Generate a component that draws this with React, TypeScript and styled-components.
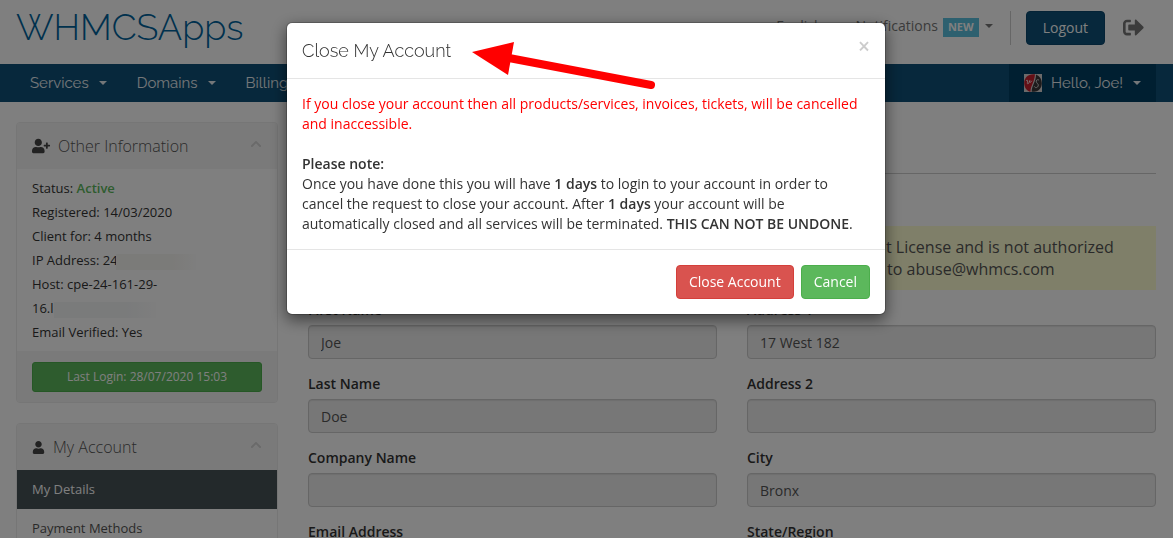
import React from "react";
import styled, { createGlobalStyle } from "styled-components";
import { FaChevronUp, FaSignOutAlt, FaUser, FaUserPlus } from "react-icons/fa";

const GlobalStyle = createGlobalStyle`
  *, *::before, *::after { box-sizing: border-box; }
  html, body { margin: 0; height: 100%; overflow: hidden; }
  body {
    background: #fff;
    color: #333;
    font: 14px/20px "Open Sans", Verdana, sans-serif;
  }
  button, input { font: inherit; }
  a { color: inherit; text-decoration: none; }
  b { font-weight: 600; }
`;

const display = `"Raleway", Lato, "Open Sans", sans-serif`;

const Container = styled.div`
  width: 100%;
  max-width: 1180px;
  margin: 0 auto;
  padding: 0 17px 0 16px;
`;

const HeaderRow = styled(Container)`
  display: flex;
  justify-content: space-between;
  height: 64px;
`;

const Logo = styled.a`
  color: #00639c;
  font: 300 36px/54px ${display};
`;

const TopNav = styled.nav`
  display: flex;
  align-items: center;
  height: 34px;
  margin: 11px 12px 0 0;
`;

const TopLink = styled.a`
  display: flex;
  align-items: center;
  height: 34px;
  margin-right: 17px;
  padding-bottom: 4px;
  color: #777;
`;

const Badge = styled.span`
  height: 19px;
  margin: 3px 6px 0 5px;
  padding: 0 5px;
  background: #5bc0de;
  color: #fff;
  font-size: 11px;
  line-height: 18px;
  font-weight: 700;
`;

const Caret = styled.span<{ $gap?: number }>`
  display: inline-block;
  margin-left: ${(p) => p.$gap ?? 0}px;
  border: 4px solid transparent;
  border-top-color: currentColor;
  border-bottom: 0;
`;

const LogoutCell = styled.div`
  margin-right: 18px;
  padding-left: 15px;
  border-left: 1px solid #ccc;
`;

const Button = styled.button<{ $color: string; $edge: string; $pad?: number }>`
  height: 34px;
  padding: 0 ${(p) => p.$pad ?? 12}px;
  border: 1px solid ${(p) => p.$edge};
  border-radius: 4px;
  background: ${(p) => p.$color};
  color: #fff;
`;

const IconLink = styled.a`
  display: flex;
  padding-bottom: 2px;
  color: #777;
  font-size: 21px;
`;

const MenuBar = styled.nav`
  background: #0e5078;
`;

const MenuRow = styled(Container)`
  display: flex;
  height: 38px;
  padding-left: 15px;
`;

const MenuLink = styled.a<{ $account?: boolean }>`
  display: flex;
  align-items: center;
  margin-left: ${(p) => (p.$account ? "auto" : "0")};
  padding: 0 15px;
  background: ${(p) => (p.$account ? "#003f62" : "transparent")};
  color: #e8eef2;
  font: 15px/20px ${display};
`;

const Avatar = styled.svg`
  width: 18px;
  height: 18px;
  margin-right: 9px;
`;

const Columns = styled(Container)`
  display: grid;
  grid-template-columns: minmax(200px, 262px) minmax(0, 1fr);
  gap: 30px;
  padding-top: 20px;
`;

const Sidebar = styled.aside`
  display: flex;
  flex-direction: column;
  gap: 20px;
  font-size: 13px;
`;

const Panel = styled.section`
  border: 1px solid #ececec;
  border-radius: 4px;
  overflow: hidden;
`;

const PanelTitle = styled.h3`
  display: flex;
  align-items: center;
  gap: 8px;
  height: 46px;
  margin: 0;
  padding: 0 15px;
  background: #f5f5f5;
  color: #555;
  font-size: 16px;
  font-weight: 300;
`;

const Collapse = styled.button`
  display: flex;
  margin-left: auto;
  padding: 0 0 4px;
  border: 0;
  background: none;
  color: #d4d4d4;
  font-size: 12px;
`;

const PanelBody = styled.div`
  padding: 7px 15px;
  line-height: 24px;
`;

const Active = styled.span`
  color: #5cb85c;
  font-weight: 600;
`;

const Redacted = styled.span<{ $tint: string; $width: number; $over?: number }>`
  display: inline-block;
  width: ${(p) => p.$width}px;
  height: 16px;
  margin-left: -${(p) => p.$over ?? 0}px;
  vertical-align: middle;
  background: linear-gradient(90deg, ${(p) => p.$tint} 70%, #fdfdfd);
`;

const PanelFooter = styled.div`
  padding: 11px 15px 10px;
  background: #f5f5f5;
`;

const LoginButton = styled(Button)`
  display: block;
  width: 100%;
  height: 30px;
  border-radius: 3px;
  font-size: 12px;
`;

const SideLink = styled.a<{ $on?: boolean }>`
  display: block;
  height: 39px;
  padding: 9px 15px;
  background: ${(p) => (p.$on ? "#465257" : "#fff")};
  color: ${(p) => (p.$on ? "#fff" : "#555")};
`;

const Main = styled.main`
  min-width: 0;
`;

const TitleRule = styled.hr`
  height: 52px;
  margin: 0 0 52px;
  border: 0;
  border-bottom: 1px solid #ccc;
`;

const LicenseNote = styled.p`
  margin: 0 0 10px;
  padding: 10px;
  background: #ffffd2;
  color: #555;
  font-size: 16px;
  line-height: 22px;
  text-align: center;
`;

const Form = styled.form`
  display: grid;
  grid-template-columns: 1fr 1fr;
  gap: 15px 30px;
`;

const Field = styled.label`
  display: flex;
  flex-direction: column;
  gap: 5px;
  font-weight: 600;
`;

const TextBox = styled.input`
  width: 100%;
  height: 34px;
  padding: 6px 12px;
  border: 1px solid #ccc;
  border-radius: 4px;
  background: #eee;
  box-shadow: inset 0 1px 1px rgba(0, 0, 0, 0.075);
  color: #555;
  font-weight: 400;
`;

const Backdrop = styled.div`
  position: fixed;
  inset: 0;
  display: flex;
  justify-content: center;
  align-items: flex-start;
  padding: 22px 1px 0 0;
  background: rgba(0, 0, 0, 0.5);
`;

const Dialog = styled.div`
  position: relative;
  width: 600px;
  max-width: 100%;
  border: 1px solid rgba(0, 0, 0, 0.2);
  border-radius: 6px;
  background: #fff;
  background-clip: padding-box;
  box-shadow: 0 5px 15px rgba(0, 0, 0, 0.5);
`;

const DialogHeader = styled.header`
  display: flex;
  justify-content: space-between;
  align-items: center;
  height: 56px;
  padding: 0 15px;
  border-bottom: 1px solid #e5e5e5;
`;

const DialogTitle = styled.h4`
  margin: 0;
  font: 300 18px/24px ${display};
`;

const CloseButton = styled.button`
  padding: 0 0 10px;
  border: 0;
  background: none;
  color: #ccc;
  font-size: 21px;
  line-height: 20px;
  font-weight: 600;
`;

const DialogBody = styled.div`
  padding: 15px;
`;

const Paragraph = styled.p<{ $warning?: boolean }>`
  margin: 0 0 ${(p) => (p.$warning ? 20 : 0)}px;
  color: ${(p) => (p.$warning ? "#f00" : "#333")};
`;

const DialogFooter = styled.footer`
  display: flex;
  justify-content: flex-end;
  gap: 7px;
  padding: 15px;
  border-top: 1px solid #e5e5e5;
`;

const Arrow = styled.svg`
  position: absolute;
  left: 184px;
  top: 18px;
  width: 186px;
  height: 50px;
  pointer-events: none;
`;

const fields = [
  ["First Name", "Joe"],
  ["Address 1", "17 West 182"],
  ["Last Name", "Doe"],
  ["Address 2", ""],
  ["Company Name", ""],
  ["City", "Bronx"],
  ["Email Address", ""],
  ["State/Region", ""],
];

export default function App() {
  return (
    <>
      <GlobalStyle />
      <HeaderRow as="header">
        <Logo href="#">WHMCSApps</Logo>
        <TopNav>
          <TopLink href="#">
            English
            <Caret $gap={8} />
          </TopLink>
          <TopLink href="#">
            Notifications
            <Badge>NEW</Badge>
            <Caret />
          </TopLink>
          <LogoutCell>
            <Button $color="#0e5078" $edge="#0b476c" $pad={16}>
              Logout
            </Button>
          </LogoutCell>
          <IconLink href="#" aria-label="Sign out">
            <FaSignOutAlt />
          </IconLink>
        </TopNav>
      </HeaderRow>
      <MenuBar>
        <MenuRow>
          {["Services", "Domains", "Billing"].map((name) => (
            <MenuLink href="#" key={name}>
              {name}
              <Caret $gap={10} />
            </MenuLink>
          ))}
          <MenuLink href="#" $account>
            <Avatar viewBox="0 0 18 18" aria-hidden="true">
              <rect width="18" height="18" fill="#d8d4d4" />
              <path d="M11 0.300C4 -0.500 0 4 0.200 9.500C0.500 14 3 17.200 6.500 17.700C6.500 12 10.500 8 11 0.300Z" fill="#c81e2d" />
              <path d="M12 0.500C17 2.500 18.800 8 17.300 12.500C15.500 17 11.500 18.200 7.700 17.800C7.500 12 12 8 12 0.500Z" fill="#3a3638" />
              <path d="M2 7c1-1.500 2-1 1.500 1s.5 3 1.500.5l.8-2c-.6 2.500.5 2.500 2 .3" fill="none" stroke="#fff" strokeWidth="0.800" />
              <path d="M15 6c-2-1-3.500.6-2.500 2.300s2.500 2 1.500 4-3.500 1.500-3.500 0" fill="none" stroke="#eee" strokeWidth="0.800" />
            </Avatar>
            Hello, Joe!
            <Caret $gap={10} />
          </MenuLink>
        </MenuRow>
      </MenuBar>
      <Columns>
        <Sidebar>
          <Panel>
            <PanelTitle>
              <FaUserPlus size={18} color="#444" />
              Other Information
              <Collapse aria-label="Collapse Other Information">
                <FaChevronUp />
              </Collapse>
            </PanelTitle>
            <PanelBody>
              <div>Status: <Active>Active</Active></div>
              <div>Registered: 14/03/2020</div>
              <div>Client for: 4 months</div>
              <div>IP Address: 24<Redacted $tint="#f7f6f2" $width={80} $over={2} /></div>
              <div>
                Host: cpe-24-161-29-
                <br />
                16.l<Redacted $tint="#f4f6f7" $width={102} />
              </div>
              <div>Email Verified: Yes</div>
            </PanelBody>
            <PanelFooter>
              <LoginButton $color="#5cb85c" $edge="#4cae4c">
                Last Login: 28/07/2020 15:03
              </LoginButton>
            </PanelFooter>
          </Panel>
          <Panel>
            <PanelTitle>
              <FaUser size={13} color="#444" />
              My Account
              <Collapse aria-label="Collapse My Account">
                <FaChevronUp />
              </Collapse>
            </PanelTitle>
            <SideLink href="#" $on>My Details</SideLink>
            <SideLink href="#">Payment Methods</SideLink>
          </Panel>
        </Sidebar>
        <Main>
          <TitleRule />
          <LicenseNote>
            Dev License: This installation of WHMCS is running under a Development License and is
            not authorized
            <br />
            to be used for production use. Please report any cases of abuse to abuse@whmcs.com
          </LicenseNote>
          <Form>
            {fields.map(([label, value]) => (
              <Field key={label}>
                {label}
                <TextBox defaultValue={value} disabled />
              </Field>
            ))}
          </Form>
        </Main>
      </Columns>
      <Backdrop>
        <Dialog role="dialog" aria-modal="true" aria-labelledby="close-account-title">
          <DialogHeader>
            <DialogTitle id="close-account-title">Close My Account</DialogTitle>
            <CloseButton aria-label="Close">×</CloseButton>
          </DialogHeader>
          <DialogBody>
            <Paragraph $warning>
              If you close your account then all products/services, invoices, tickets, will be
              cancelled and inaccessible.
            </Paragraph>
            <Paragraph>
              <b>Please note:</b>
            </Paragraph>
            <Paragraph>
              Once you have done this you will have <b>1 days</b> to login to your account in order
              to cancel the request to close your account. After <b>1 days</b> your account will be
              automatically closed and all services will be terminated.{" "}
              <b>THIS CAN NOT BE UNDONE</b>.
            </Paragraph>
          </DialogBody>
          <DialogFooter>
            <Button $color="#d9534f" $edge="#d43f3a">Close Account</Button>
            <Button $color="#5cb85c" $edge="#4cae4c">Cancel</Button>
          </DialogFooter>
          <Arrow viewBox="0 0 186 50" aria-hidden="true">
            <path d="M38 17 L180 44" stroke="#f00" strokeWidth="8" strokeLinecap="round" />
            <path d="M1 11 L43 1 L37 34 Z" fill="#f00" />
          </Arrow>
        </Dialog>
      </Backdrop>
    </>
  );
}
